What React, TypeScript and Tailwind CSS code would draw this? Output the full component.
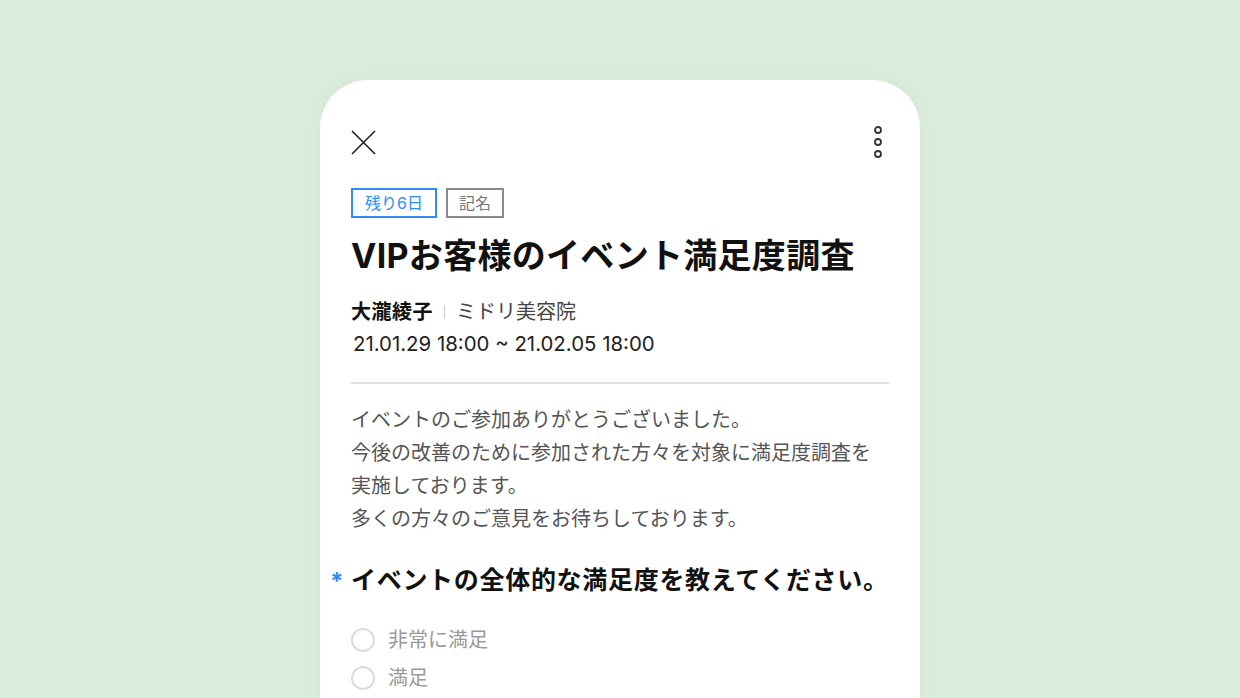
import React from "react";

const FONT = { fontFamily: '"Inter", "Noto Sans CJK JP", sans-serif' };

const OPTIONS = ["非常に満足", "満足", "普通", "不満"];

export default function App() {
  return (
    <div className="h-[698px] w-full overflow-hidden bg-[#dbeddb] flex justify-center pt-20" style={FONT}>
      <div className="w-[600px] h-[900px] bg-white rounded-t-[48px] shadow-[0_0_24px_rgba(0,0,0,0.04)] px-[31px] pt-[48px]">
        {/* top bar */}
        <div className="flex items-center justify-between h-[28px]">
          <svg width="27" height="27" viewBox="0 0 27 27" className="-ml-[1px]">
            <path d="M2 2 L25 25 M25 2 L2 25" stroke="#222" strokeWidth="1.6" fill="none" />
          </svg>
          <svg width="12" height="32" viewBox="0 0 12 32" className="mr-[5px]">
            <circle cx="6" cy="4" r="3" stroke="#333" strokeWidth="1.8" fill="none" />
            <circle cx="6" cy="16" r="3" stroke="#333" strokeWidth="1.8" fill="none" />
            <circle cx="6" cy="28" r="3" stroke="#333" strokeWidth="1.8" fill="none" />
          </svg>
        </div>

        {/* tags */}
        <div className="flex gap-[9px] mt-[32px]">
          <span className="h-[30px] px-[12px] flex items-center border-2 border-[#2f8cf5] text-[#2f8cf5] text-[16px]">残り6日</span>
          <span className="h-[30px] px-[11px] flex items-center border-2 border-[#8a8a8a] text-[#777] text-[16px]">記名</span>
        </div>

        <h1 className="mt-[14px] text-[34px] font-bold text-[#111] leading-[48px] tracking-[0.3px] whitespace-nowrap">VIPお客様のイベント満足度調査</h1>

        <div className="mt-[16px] text-[20px] leading-[32px] text-[#222]">
          <div className="flex items-center">
            <span className="font-bold text-[#111] tracking-[0.5px]">大瀧綾子</span>
            <span className="mx-[11px] w-px h-[14px] bg-[#cfcfcf]" />
            <span className="text-[#444]">ミドリ美容院</span>
          </div>
          <div className="text-[#222] pl-[2px] text-[20.4px]">21.01.29 18:00 ~ 21.02.05 18:00</div>
        </div>

        <div className="mt-[22px] h-[2px] bg-[#e2e2e2]" />

        <div className="mt-[20px] text-[20px] leading-[33px] text-[#555]">
          <p>イベントのご参加ありがとうございました。</p>
          <p>今後の改善のために参加された方々を対象に満足度調査を</p>
          <p>実施しております。</p>
          <p>多くの方々のご意見をお待ちしております。</p>
        </div>

        <div className="mt-[26px] relative">
          <span className="absolute -left-[21px] top-[2px] text-[#2f8cf5] text-[24px] font-bold">*</span>
          <h2 className="text-[25px] font-bold leading-[36px] text-[#111] tracking-[0.7px] whitespace-nowrap">イベントの全体的な満足度を教えてください。</h2>
        </div>

        <div className="mt-[30px] flex flex-col gap-[14px]">
          {OPTIONS.map((o) => (
            <label key={o} className="flex items-center gap-[13px] h-[24px]">
              <span className="w-[24px] h-[24px] rounded-full border-2 border-[#dcdcdc]" />
              <span className="text-[20px] text-[#999]">{o}</span>
            </label>
          ))}
        </div>
      </div>
    </div>
  );
}
